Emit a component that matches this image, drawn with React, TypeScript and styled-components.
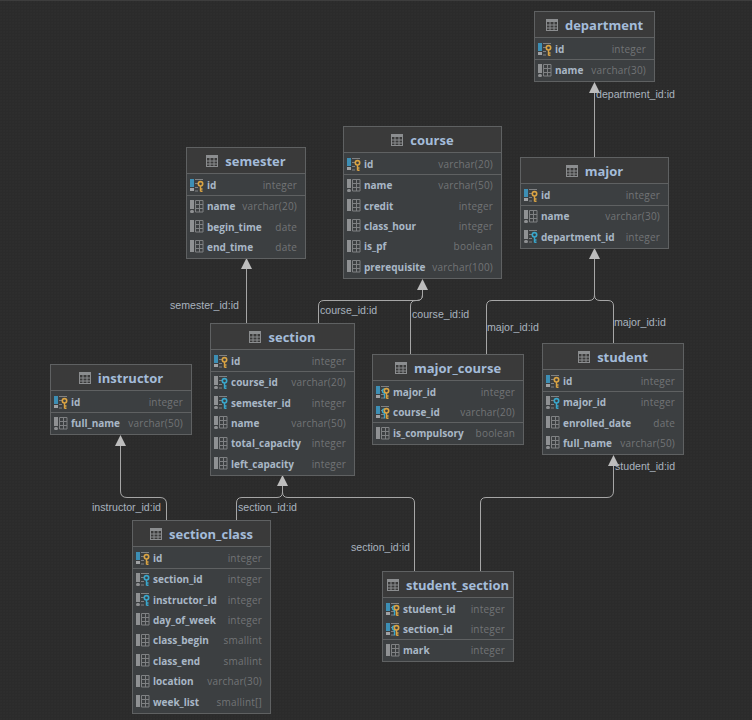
import styled, { createGlobalStyle } from "styled-components";

const GlobalStyle = createGlobalStyle`
  html, body { margin: 0; padding: 0; background: #2b2b2b; }
`

const Canvas = styled.div`
  position: relative;
  width: 752px;
  height: 720px;
  overflow: hidden;
  box-sizing: border-box;
  border-top: 1px solid #3d3d3d;
  background-color: #2b2b2b;
  background-image: radial-gradient(circle at 1px 1px, #303030 0.6px, transparent 0.8px);
  background-size: 3px 3px;
`

const Edges = styled.svg`
  position: absolute;
  left: 0;
  top: -1px;
  width: 752px;
  height: 720px;
`

const EdgeLabel = styled.span<{ $x: number; $y: number }>`
  position: absolute;
  left: ${p => p.$x}px;
  top: ${p => p.$y - 8}px;
  height: 14px;
  line-height: 14px;
  font-family: "Liberation Sans", Arial, sans-serif;
  font-size: 10.6px;
  color: #a9b3bf;
  white-space: nowrap;
`

const TableBox = styled.div<{ $x: number; $y: number; $w: number }>`
  position: absolute;
  left: ${p => p.$x}px;
  top: ${p => p.$y - 1}px;
  width: ${p => p.$w}px;
  box-sizing: border-box;
  border: 1px solid #5f6162;
  background: #3c3f41;
  font-family: "Open Sans", sans-serif;
`

const TableHeader = styled.div`
  display: flex;
  align-items: center;
  justify-content: center;
  column-gap: 7px;
  height: 26px;
  box-sizing: border-box;
  background: #3a3a3a;
  border-bottom: 1px solid #5f6162;
`

const TableTitle = styled.span`
  font-family: "Open Sans", sans-serif;
  font-size: 13px;
  font-weight: 700;
  color: #a4bcd9;
`

const Section = styled.div<{ $pk?: boolean }>`
  display: flex;
  flex-direction: column;
  box-sizing: border-box;
  padding: ${p => (p.$pk ? "1px 0 0" : "0 0 1px")};
  border-bottom: ${p => (p.$pk ? "1px solid #5f6162" : "none")};
`

const Row = styled.div<{ $pk?: boolean }>`
  display: flex;
  align-items: center;
  justify-content: space-between;
  height: ${p => (p.$pk ? "20px" : "20.4px")};
  padding: 0 8px 0 3px;
`

const NameCell = styled.div`
  display: flex;
  align-items: center;
  column-gap: 3px;
`

const ColumnName = styled.span`
  font-family: "Open Sans", sans-serif;
  font-size: 10px;
  font-weight: 700;
  color: #a9b7c6;
  white-space: nowrap;
`

const ColumnType = styled.span`
  font-size: 10px;
  color: #727476;
  letter-spacing: 0.2px;
  white-space: nowrap;
`

const TableIcon = () => (
  <svg width="12" height="12" viewBox="0 0 12 12">
    <rect x="0" y="0" width="12" height="3" fill="#8b8d8f" />
    <rect x="0.5" y="0.5" width="11" height="11" fill="none" stroke="#8b8d8f" />
    <path d="M0 6h12M0 9h12M4 3v9M8 3v9" stroke="#8b8d8f" strokeWidth="1" />
  </svg>
)

type ColumnKind = "pk" | "fk" | "pkfk" | "plain"

const ColumnIcon = ({ kind, notNull }: { kind: ColumnKind; notNull: boolean }) => {
  const keyColor = kind === "fk" ? "#39a7cc" : "#d9a343"
  const isPk = kind === "pk" || kind === "pkfk"
  return (
    <svg width="14" height="13" viewBox="0 0 14 13">
      {isPk ? (
        <>
          <rect x="0" y="0" width="4" height="8" fill="#3d8fb5" />
          <rect x="0" y="9" width="4" height="3" fill="#a0a2a4" />
        </>
      ) : notNull ? (
        <>
          <rect x="0" y="0" width="4" height="9" fill="#8f9193" />
          <rect x="0" y="10" width="4" height="3" rx="1.5" fill="#8f9193" />
        </>
      ) : (
        <rect x="0" y="0" width="4" height="12" fill="#8f9193" />
      )}
      {kind === "plain" ? (
        <path d="M5.5 .5h7.5v11.5h-7.5zM5.5 4.5h7.5M5.5 8.5h7.5M9.5 .5v11.5" fill="none" stroke="#7f8183" strokeWidth="1" />
      ) : (
        <>
          <path d="M5 .5h8M5 4.5h3M5 8.5h3M5 12h3" fill="none" stroke="#7f8183" strokeWidth="1" />
          {kind === "pkfk" && (
            <>
              <circle cx="8.5" cy="5" r="2" fill="#3c3f41" stroke="#39a7cc" strokeWidth="1.5" />
              <path d="M8.5 7v5.5" stroke="#39a7cc" strokeWidth="1.4" />
            </>
          )}
          <circle cx="10.5" cy="4.8" r="2.2" fill="#3c3f41" stroke={keyColor} strokeWidth="1.6" />
          <path d="M10.5 7v5.5M10.5 10h2M10.5 12.2h2" stroke={keyColor} strokeWidth="1.4" fill="none" />
        </>
      )}
    </svg>
  )
}

type Column = { name: string; type: string; kind?: ColumnKind; notNull?: boolean }
type Table = { title: string; x: number; y: number; w: number; pk: Column[]; columns: Column[] }

const pkInt: Column = { name: "id", type: "integer", kind: "pk", notNull: true }

const tables: Table[] = [
  { title: "department", x: 534, y: 11, w: 121, pk: [pkInt], columns: [
    { name: "name", type: "varchar(30)", notNull: true },
  ] },
  { title: "course", x: 343, y: 126, w: 159, pk: [{ ...pkInt, type: "varchar(20)" }], columns: [
    { name: "name", type: "varchar(50)", notNull: true },
    { name: "credit", type: "integer" },
    { name: "class_hour", type: "integer" },
    { name: "is_pf", type: "boolean" },
    { name: "prerequisite", type: "varchar(100)" },
  ] },
  { title: "major", x: 520, y: 157, w: 149, pk: [pkInt], columns: [
    { name: "name", type: "varchar(30)", notNull: true },
    { name: "department_id", type: "integer", kind: "fk", notNull: true },
  ] },
  { title: "semester", x: 186, y: 147, w: 120, pk: [pkInt], columns: [
    { name: "name", type: "varchar(20)", notNull: true },
    { name: "begin_time", type: "date" },
    { name: "end_time", type: "date" },
  ] },
  { title: "section", x: 210, y: 323, w: 145, pk: [pkInt], columns: [
    { name: "course_id", type: "varchar(20)", kind: "fk", notNull: true },
    { name: "semester_id", type: "integer", kind: "fk", notNull: true },
    { name: "name", type: "varchar(50)", notNull: true },
    { name: "total_capacity", type: "integer" },
    { name: "left_capacity", type: "integer" },
  ] },
  { title: "major_course", x: 372, y: 354, w: 152, pk: [
    { name: "major_id", type: "integer", kind: "pkfk", notNull: true },
    { name: "course_id", type: "varchar(20)", kind: "pkfk", notNull: true },
  ], columns: [
    { name: "is_compulsory", type: "boolean" },
  ] },
  { title: "student", x: 542, y: 343, w: 142, pk: [pkInt], columns: [
    { name: "major_id", type: "integer", kind: "fk", notNull: true },
    { name: "enrolled_date", type: "date" },
    { name: "full_name", type: "varchar(50)", notNull: true },
  ] },
  { title: "instructor", x: 50, y: 364, w: 142, pk: [pkInt], columns: [
    { name: "full_name", type: "varchar(50)", notNull: true },
  ] },
  { title: "section_class", x: 132, y: 520, w: 139, pk: [pkInt], columns: [
    { name: "section_id", type: "integer", kind: "fk", notNull: true },
    { name: "instructor_id", type: "integer", kind: "fk", notNull: true },
    { name: "day_of_week", type: "integer" },
    { name: "class_begin", type: "smallint" },
    { name: "class_end", type: "smallint" },
    { name: "location", type: "varchar(30)" },
    { name: "week_list", type: "smallint[]" },
  ] },
  { title: "student_section", x: 382, y: 571, w: 132, pk: [
    { name: "student_id", type: "integer", kind: "pkfk", notNull: true },
    { name: "section_id", type: "integer", kind: "pkfk", notNull: true },
  ], columns: [
    { name: "mark", type: "integer" },
  ] },
]

const labels = [
  { text: "department_id:id", x: 596, y: 94 },
  { text: "semester_id:id", x: 170, y: 305 },
  { text: "course_id:id", x: 320, y: 310 },
  { text: "course_id:id", x: 412, y: 314 },
  { text: "major_id:id", x: 487, y: 327 },
  { text: "major_id:id", x: 614, y: 322 },
  { text: "student_id:id", x: 615, y: 466 },
  { text: "instructor_id:id", x: 92, y: 507 },
  { text: "section_id:id", x: 238, y: 507 },
  { text: "section_id:id", x: 351, y: 547 },
]

const edgePaths = [
  "M594.5 157V90",
  "M246.5 323V266",
  "M318.5 323V306Q318.5 300.5 324 300.5H417Q422.5 300.5 422.5 295V288",
  "M410.5 354V306Q410.5 300.5 416 300.5H417Q422.5 300.5 422.5 295V288",
  "M486.5 354V306Q486.5 300.5 492 300.5H589Q594.5 300.5 594.5 295V256",
  "M613.5 343V306Q613.5 300.5 608 300.5H600Q594.5 300.5 594.5 295V256",
  "M166.5 520V504Q166.5 497.5 160 497.5H127Q120.5 497.5 120.5 491V444",
  "M236.5 520V503Q236.5 497.5 242 497.5H277Q282.5 497.5 282.5 492V485",
  "M414.5 571V503Q414.5 497.5 409 497.5H288Q282.5 497.5 282.5 492V485",
  "M480.5 571V503Q480.5 497.5 486 497.5H607Q613.5 497.5 613.5 491V464",
]

const arrows = [
  [594.5, 82], [246.5, 258], [422.5, 279], [594.5, 248], [120.5, 435], [282.5, 475], [613.5, 455],
]

const ColumnRow = ({ col, pk }: { col: Column; pk?: boolean }) => (
  <Row $pk={pk}>
    <NameCell>
      <ColumnIcon kind={col.kind ?? "plain"} notNull={!!col.notNull} />
      <ColumnName>{col.name}</ColumnName>
    </NameCell>
    <ColumnType>{col.type}</ColumnType>
  </Row>
)

const App = () => (
  <Canvas>
    <GlobalStyle />
    <Edges viewBox="0 0 752 720">
      {edgePaths.map((d, i) => (
        <path key={i} d={d} fill="none" stroke="#a6a6a6" strokeWidth="1" />
      ))}
      {arrows.map(([x, y], i) => (
        <polygon key={i} points={`${x},${y} ${x + 5.5},${y + 11} ${x - 5.5},${y + 11}`} fill="#bdbdbd" />
      ))}
    </Edges>
    {labels.map((l, i) => (
      <EdgeLabel key={i} $x={l.x} $y={l.y}>{l.text}</EdgeLabel>
    ))}
    {tables.map(t => (
      <TableBox key={t.title} $x={t.x} $y={t.y} $w={t.w}>
        <TableHeader>
          <TableIcon />
          <TableTitle>{t.title}</TableTitle>
        </TableHeader>
        <Section $pk>
          {t.pk.map(c => <ColumnRow key={c.name} col={c} pk />)}
        </Section>
        <Section>
          {t.columns.map(c => <ColumnRow key={c.name} col={c} />)}
        </Section>
      </TableBox>
    ))}
  </Canvas>
)

export default App
